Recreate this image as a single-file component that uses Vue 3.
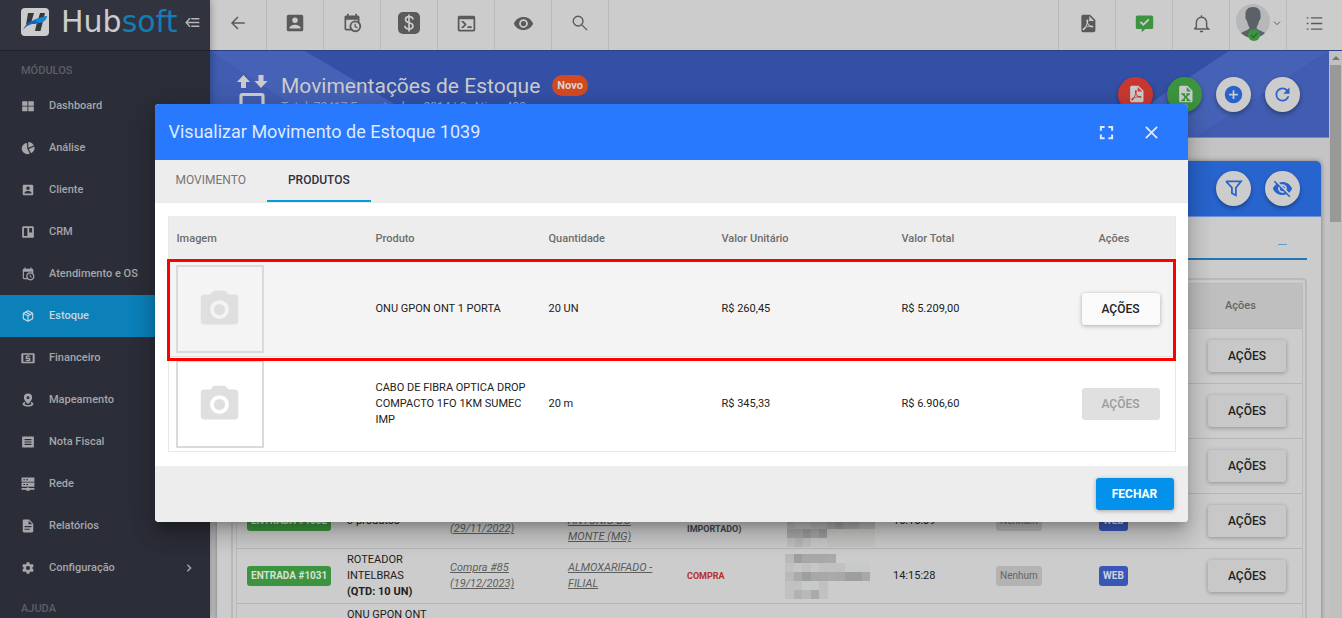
<script setup>
import { h } from 'vue'

const icons = {
  box: 'M6,17C6,15 10,13.9 12,13.9C14,13.9 18,15 18,17V18H6M15,9A3,3 0 0,1 12,12A3,3 0 0,1 9,9A3,3 0 0,1 12,6A3,3 0 0,1 15,9M3,5V19A2,2 0 0,0 5,21H19A2,2 0 0,0 21,19V5A2,2 0 0,0 19,3H5C3.89,3 3,3.9 3,5Z',
  calendar: 'M15,13H16.5V15.82L18.94,17.23L18.19,18.53L15,16.69V13M19,8H5V19H9.67C9.24,18.09 9,17.07 9,16A7,7 0 0,1 16,9C17.07,9 18.09,9.24 19,9.67V8M5,21C3.89,21 3,20.1 3,19V5C3,3.89 3.89,3 5,3H6V1H8V3H16V1H18V3H19A2,2 0 0,1 21,5V11.1C22.24,12.36 23,14.09 23,16A7,7 0 0,1 16,23C14.09,23 12.36,22.24 11.1,21H5M16,11.15A4.85,4.85 0 0,0 11.15,16C11.15,18.68 13.32,20.85 16,20.85A4.85,4.85 0 0,0 20.85,16C20.85,13.32 18.68,11.15 16,11.15Z',
  console: 'M20,19V7H4V19H20M20,3A2,2 0 0,1 22,5V19A2,2 0 0,1 20,21H4A2,2 0 0,1 2,19V5C2,3.89 2.9,3 4,3H20M13,17V15H18V17H13M9.58,13L5.57,9H8.4L11.7,12.3C12.09,12.69 12.09,13.33 11.7,13.72L8.42,17H5.59L9.58,13Z',
  eye: 'M12,9A3,3 0 0,0 9,12A3,3 0 0,0 12,15A3,3 0 0,0 15,12A3,3 0 0,0 12,9M12,17A5,5 0 0,1 7,12A5,5 0 0,1 12,7A5,5 0 0,1 17,12A5,5 0 0,1 12,17M12,4.5C7,4.5 2.73,7.61 1,12C2.73,16.39 7,19.5 12,19.5C17,19.5 21.27,16.39 23,12C21.27,7.61 17,4.5 12,4.5Z',
  eyeOff: 'M11.83,9L15,12.16C15,12.11 15,12.05 15,12A3,3 0 0,0 12,9C11.94,9 11.89,9 11.83,9M7.53,9.8L9.08,11.35C9.03,11.56 9,11.77 9,12A3,3 0 0,0 12,15C12.22,15 12.44,14.97 12.65,14.92L14.2,16.47C13.53,16.8 12.79,17 12,17A5,5 0 0,1 7,12C7,11.21 7.2,10.47 7.53,9.8M2,4.27L4.28,6.55L4.73,7C3.08,8.3 1.78,10 1,12C2.73,16.39 7,19.5 12,19.5C13.55,19.5 15.03,19.2 16.38,18.66L16.81,19.08L19.73,22L21,20.73L3.27,3M12,7A5,5 0 0,1 17,12C17,12.64 16.87,13.26 16.64,13.82L19.57,16.75C21.07,15.5 22.27,13.86 23,12C21.27,7.61 17,4.5 12,4.5C10.6,4.5 9.26,4.75 8,5.2L10.17,7.35C10.74,7.13 11.35,7 12,7Z',
  pdf: 'M14,9H19.5L14,3.5V9M7,2H15L21,8V20A2,2 0 0,1 19,22H7C5.89,22 5,21.1 5,20V4A2,2 0 0,1 7,2M11.93,12.44C12.34,13.34 12.86,14.08 13.46,14.59L13.87,14.91C13,15.07 11.8,15.35 10.53,15.84L10.42,15.88L10.92,14.84C11.37,13.97 11.7,13.18 11.93,12.44M18.41,16.25C18.59,16.07 18.68,15.84 18.69,15.59C18.72,15.39 18.67,15.2 18.57,15.04C18.28,14.57 17.53,14.35 16.29,14.35L15,14.42L14.13,13.84C13.5,13.32 12.93,12.41 12.53,11.28L12.57,11.14C12.9,9.81 13.21,8.2 12.55,7.54C12.39,7.38 12.17,7.3 11.94,7.3H11.7C11.33,7.3 11,7.69 10.91,8.07C10.54,9.4 10.76,10.13 11.13,11.34V11.35C10.88,12.23 10.56,13.25 10.05,14.28L9.09,16.08L8.2,16.57C7,17.32 6.43,18.16 6.32,18.69C6.28,18.88 6.3,19.05 6.37,19.23L6.4,19.28L6.88,19.59L7.32,19.7C8.13,19.7 9.05,18.75 10.29,16.63L10.47,16.56C11.5,16.23 12.78,16 14.5,15.81C15.53,16.32 16.74,16.55 17.5,16.55C17.94,16.55 18.24,16.44 18.41,16.25',
  excel: 'M14,9H19.5L14,3.5V9M7,2H15L21,8V20A2,2 0 0,1 19,22H7C5.89,22 5,21.1 5,20V4A2,2 0 0,1 7,2M7.500,11V12.800H8.800L11.400,15.800L8.800,19H7.500V20.800H12V19H11.400L12.900,17.200L14.400,19H13.800V20.800H18.500V19H17.200L14.400,15.700L17,12.800H18V11H13.600V12.800H14.200L12.900,14.200L11.600,12.800H12V11Z',
  messageCheck: 'M3,2H21A2,2 0 0,1 23,4V17A2,2 0 0,1 21,19H13L8.500,23V19H3A2,2 0 0,1 1,17V4A2,2 0 0,1 3,2M10.500,15L18.200,7.500L16.700,6L10.500,12L7.600,9.200L6.100,10.700Z',
  plusCircle: 'M17,13H13V17H11V13H7V11H11V7H13V11H17M12,2A10,10 0 0,0 2,12A10,10 0 0,0 12,22A10,10 0 0,0 22,12A10,10 0 0,0 12,2Z',
  refresh: 'M17.65,6.35C16.2,4.9 14.21,4 12,4A8,8 0 0,0 4,12A8,8 0 0,0 12,20C15.73,20 18.84,17.45 19.73,14H17.65C16.83,16.33 14.61,18 12,18A6,6 0 0,1 6,12A6,6 0 0,1 12,6C13.66,6 15.14,6.69 16.22,7.78L13,11H20V4L17.65,6.35Z',
  camera: 'M4,4H7L9,2H15L17,4H20A2,2 0 0,1 22,6V18A2,2 0 0,1 20,20H4A2,2 0 0,1 2,18V6A2,2 0 0,1 4,4M12,7A5,5 0 0,0 7,12A5,5 0 0,0 12,17A5,5 0 0,0 17,12A5,5 0 0,0 12,7M12,9A3,3 0 0,1 15,12A3,3 0 0,1 12,15A3,3 0 0,1 9,12A3,3 0 0,1 12,9Z',
  cog: 'M12,15.5A3.5,3.5 0 0,1 8.5,12A3.5,3.5 0 0,1 12,8.5A3.5,3.5 0 0,1 15.5,12A3.5,3.5 0 0,1 12,15.5M19.43,12.97C19.47,12.65 19.5,12.33 19.5,12C19.5,11.67 19.47,11.34 19.43,11L21.54,9.37C21.73,9.22 21.78,8.95 21.66,8.73L19.66,5.27C19.54,5.05 19.27,4.96 19.05,5.05L16.56,6.05C16.04,5.66 15.5,5.32 14.87,5.07L14.5,2.42C14.46,2.18 14.25,2 14,2H10C9.75,2 9.54,2.18 9.5,2.42L9.13,5.07C8.5,5.32 7.96,5.66 7.44,6.05L4.95,5.05C4.73,4.96 4.46,5.05 4.34,5.27L2.34,8.73C2.21,8.95 2.27,9.22 2.46,9.37L4.57,11C4.53,11.34 4.5,11.67 4.5,12C4.5,12.33 4.53,12.65 4.57,12.97L2.46,14.63C2.27,14.78 2.21,15.05 2.34,15.27L4.34,18.73C4.46,18.95 4.73,19.03 4.95,18.95L7.44,17.94C7.96,18.34 8.5,18.68 9.13,18.93L9.5,21.58C9.54,21.82 9.75,22 10,22H14C14.25,22 14.46,21.82 14.5,21.58L14.87,18.93C15.5,18.67 16.04,18.34 16.56,17.94L19.05,18.95C19.27,19.03 19.54,18.95 19.66,18.73L21.66,15.27C21.78,15.05 21.73,14.78 21.54,14.63L19.43,12.97Z',
  package: 'M21,16.5C21,16.88 20.79,17.21 20.47,17.38L12.57,21.82C12.41,21.94 12.21,22 12,22C11.79,22 11.59,21.94 11.43,21.82L3.53,17.38C3.21,17.21 3,16.88 3,16.5V7.5C3,7.12 3.21,6.79 3.53,6.62L11.43,2.18C11.59,2.06 11.79,2 12,2C12.21,2 12.41,2.06 12.57,2.18L20.47,6.62C20.79,6.79 21,7.12 21,7.5V16.5M12,4.15L10.11,5.22L16,8.61L17.96,7.5L12,4.15M6.04,7.5L12,10.85L13.96,9.75L8.08,6.35L6.04,7.5M5,15.91L11,19.29V12.58L5,9.21V15.91M19,15.91V9.21L13,12.58V19.29L19,15.91Z',
  dashboard: 'M2,4H11V11.500H2ZM12.500,4H22V11.500H12.500ZM2,13H11V21H2ZM12.500,13H22V21H12.500Z',
  pie: 'M10.500,3.500V12.500L15,21.500A9.500,9.500 0 1,1 10.500,3.500M12.500,1.500A10.500,10.500 0 0,1 22,7.500L12.500,11.500ZM23,9.500A10.500,10.500 0 0,1 17,20.800L13.500,13.500Z',
  board: 'M4,2H20A2,2 0 0,1 22,4V20A2,2 0 0,1 20,22H4A2,2 0 0,1 2,20V4A2,2 0 0,1 4,2M5,5V19H11V5ZM14,5V13H19V5Z',
  cash: 'M2,4H22A2,2 0 0,1 23.500,6V19A2,2 0 0,1 22,21H2A2,2 0 0,1 .500,19V6A2,2 0 0,1 2,4M4,6.500V18.500H20V6.500ZM8,8H11V7H13V8H16V10H10.500V11.500H16V17H13V18H11V17H8V15H13.500V13.500H8Z',
  marker: 'M12,1A7,7 0 0,1 19,8C19,13 12,19 12,19C12,19 5,13 5,8A7,7 0 0,1 12,1M12,5.500A2.500,2.500 0 1,0 12,10.500A2.500,2.500 0 1,0 12,5.500M6,15L7.500,17C4,19 8,21 12,21C16,21 20,19 16.500,17L18,15C26,20 18,23.500 12,23.500C6,23.500 -2,20 6,15',
  receipt: 'M2,2L4,3L6,2L8,3L10,2L12,3L14,2L16,3L18,2L20,3L22,2V22L20,21L18,22L16,21L14,22L12,21L10,22L8,21L6,22L4,21L2,22ZM6,7V9H18V7ZM6,11V13H18V11ZM6,15V17H18V15Z',
  server: 'M1,1H23V8H1ZM1,9.500H23V16.500H1ZM11,16H13V19H23V22H15V23.500H9V22H1V19H11ZM4,4V5.500H7V4ZM9,4V5.500H12V4ZM4,12V13.500H7V12ZM9,12V13.500H12V12Z',
  file: 'M5,1H14L21,8V21A2,2 0 0,1 19,23H5A2,2 0 0,1 3,21V3A2,2 0 0,1 5,1M13,3V9H19.500ZM6,12V14H18V12ZM6,16.500V18.500H15V16.500Z'
}

const strokes = {
  back: { d: 'M21 12H4M12 4L4 12L12 20', w: 2 },
  search: { d: 'M9.500 3A6.500 6.500 0 1 0 9.500 16A6.500 6.500 0 1 0 9.500 3M14.500 14.500L21.500 21.500', w: 1.8 },
  bell: { d: 'M3 19H21L18.500 16.500V10.500A6.500 6.500 0 0 0 5.500 10.500V16.500L3 19M12 4V1.500M10 22H14', w: 1.8 },
  chevronDown: { d: 'M3 8L12 17L21 8', w: 3 },
  chevronRight: { d: 'M8 4L16 12L8 20', w: 3.500 },
  list: { d: 'M7 4H23M7 12H23M7 20H23M1 4H3.500M1 12H3.500M1 20H3.500', w: 1.800 },
  fold: { d: 'M8 12H23M10 6H23M10 18H23M8 5L2 12L8 19M2 12H10', w: 2.400 },
  fullscreen: { d: 'M3 9V3H9M15 3H21V9M21 15V21H15M9 21H3V15', w: 3.200 },
  close: { d: 'M3 3L21 21M21 3L3 21', w: 2.800 },
  filter: { d: 'M2.500 3H21.500L15 11V20.500L10 18V11L2.500 3', w: 2.200 }
}

const Icon = ({ name, size }) => {
  const s = strokes[name]
  return h('svg', { viewBox: '0 0 24 24', width: size, height: size, 'aria-hidden': 'true' }, [
    s
      ? h('path', { d: s.d, fill: 'none', stroke: 'currentColor', 'stroke-width': s.w })
      : h('path', { d: icons[name], fill: 'currentColor', 'fill-rule': 'evenodd' })
  ])
}
Icon.props = ['name', 'size']

const menu = [
  ['Dashboard', 'dashboard'],
  ['Análise', 'pie'],
  ['Cliente', 'box'],
  ['CRM', 'board'],
  ['Atendimento e OS', 'calendar'],
  ['Estoque', 'package'],
  ['Financeiro', 'cash'],
  ['Mapeamento', 'marker'],
  ['Nota Fiscal', 'receipt'],
  ['Rede', 'server'],
  ['Relatórios', 'file'],
  ['Configuração', 'cog']
]

const products = [
  { name: 'ONU GPON ONT 1 PORTA', qty: '20 UN', unit: 'R$ 260,45', total: 'R$ 5.209,00', off: false },
  { name: 'CABO DE FIBRA OPTICA DROP COMPACTO 1FO 1KM SUMEC IMP', qty: '20 m', unit: 'R$ 345,33', total: 'R$ 6.906,60', off: true }
]

const widths = [100, 103, 118, 119, 99, 107, 103, 103, 109, 104]
const movements = [
  {}, {}, {},
  {
    id: 'ENTRADA #1032', items: ['3 produtos'], link: ['Compra', '(29/11/2022)'],
    place: ['SANTO', 'ANTONIO DO', 'MONTE (MG)'], kind: ['ENTRADA (XML', 'IMPORTADO)'], tone: 'slate', time: '16:15:09',
    pixels: [
      'aaaaaaaaaaa', 'bbbbbbbbbbb', 'dccddfgffdd', 'ffgfghhhhhh', 'bcbaahhhhhh'
    ]
  },
  {
    id: 'ENTRADA #1031', items: ['ROTEADOR', 'INTELBRAS'], extra: '(QTD: 10 UN)', link: ['Compra #85', '(19/12/2023)'],
    place: ['ALMOXARIFADO -', 'FILIAL'], kind: ['COMPRA'], tone: 'red', time: '14:15:28',
    pixels: ['cgfffe----', 'bhbhbbbaaa', 'cegffefggf', 'bbaab-----', 'bdceb-----']
  },
  { items: ['ONU GPON ONT', '1 PORTA'], extra: '(QTD: 5 UN)', last: true }
]
</script>

<template>
  <div class="app">
    <aside class="sidebar">
      <div class="brand">
        <svg class="mark" viewBox="0 0 28 28" width="28" height="28" aria-hidden="true">
          <rect width="28" height="28" rx="4" fill="#ccc" />
          <path d="M7 5H13L10.500 13.500L5 17ZM19 5H24L19.500 23H14L15.500 16L19 12H17Z" fill="#34373d" />
          <path d="M2 22C5 14 13 11 26 8C25 14 18 16 11 16C7 17 4 19 2 22Z" fill="#1262c4" />
          <path d="M13 12C17 10 21 9 26 8C25 13 22 14 18 15Z" fill="#1387cf" />
        </svg>
        <span class="wordmark">Hub<span>soft</span></span>
        <button class="fold" aria-label="Recolher menu"><Icon name="fold" size="15" /></button>
      </div>
      <h2 class="section">MÓDULOS</h2>
      <nav>
        <a v-for="([label, icon], i) in menu" :key="label" href="#" class="nav-item" :class="{ active: i === 5 }">
          <Icon :name="icon" size="14" />
          <span>{{ label }}</span>
          <Icon v-if="i === 11" class="more" name="chevronRight" size="10" />
        </a>
      </nav>
      <h2 class="section">AJUDA</h2>
    </aside>

    <div class="main">
      <header class="topbar">
        <button aria-label="Voltar"><Icon name="back" size="18" /></button>
        <button aria-label="Clientes"><Icon name="box" size="22" /></button>
        <button aria-label="Agenda"><Icon name="calendar" size="20" /></button>
        <button aria-label="Financeiro">
          <svg viewBox="0 0 22 22" width="22" height="22" aria-hidden="true">
            <rect width="22" height="22" rx="5" fill="#5a5a5a" />
            <path d="M15 7.500C14.500 3.500 7.500 4 7.500 7.500C7.500 12 15 9.500 15 14C15 18 7 18 7 13.800M11 2.500V19.500" fill="none" stroke="#ccc" stroke-width="1.700" />
          </svg>
        </button>
        <button aria-label="Console"><Icon name="console" size="21" /></button>
        <button aria-label="Visualizar"><Icon name="eye" size="21" /></button>
        <button aria-label="Buscar"><Icon name="search" size="18" /></button>
        <span class="spacer"></span>
        <button aria-label="Relatórios PDF"><Icon name="pdf" size="21" /></button>
        <button aria-label="Mensagens" class="ok"><Icon name="messageCheck" size="19" /></button>
        <button aria-label="Notificações"><Icon name="bell" size="19" /></button>
        <button aria-label="Usuário" class="user">
          <svg viewBox="0 0 36 40" width="36" height="40" aria-hidden="true">
            <circle cx="18" cy="18" r="17" fill="#b7b8ba" />
            <path d="M18 4C12 4 10 8 10.500 13C10 15 11 17 12 18C12.500 21 14 23 14.500 25C14 27 9 28 6 30A17 17 0 0 0 30 30C27 28 22 27 21.500 25C22 23 23.500 21 24 18C25 17 26 15 25.500 13C26 8 24 4 18 4Z" fill="#5b6168" />
            <circle cx="19" cy="32" r="6" fill="#3d9440" />
            <path d="M16 32L18.500 34.500L22.500 30" fill="none" stroke="#2c6e30" stroke-width="1.500" />
          </svg>
          <Icon name="chevronDown" size="8" />
        </button>
        <button aria-label="Menu rápido"><Icon name="list" size="17" /></button>
      </header>

      <div class="scroll">
        <div class="page">
          <section class="banner">
            <svg class="rays left" viewBox="0 0 240 86" width="240" height="86" aria-hidden="true">
              <path d="M0 0L130 86H0Z" fill="#415cb0" />
              <path d="M0 0H95L240 86H130Z" fill="#4662b6" />
            </svg>
            <svg class="rays right" viewBox="0 0 260 86" width="260" height="86" aria-hidden="true">
              <path d="M160 0H260L128 86H30Z" fill="#4662b6" />
              <path d="M260 0V86H128Z" fill="#415cb0" />
            </svg>
            <svg class="stock" viewBox="0 0 32 38" width="32" height="38" aria-hidden="true">
              <path d="M7.500 0L14 7H10V13H5V7H1ZM22.500 0H27.500V6H31.500L25 13L18.500 6H22.500Z" fill="#ccc" />
              <path d="M5 36V21Q5 19.500 6.500 19.500H25.500Q27 19.500 27 21V36Z" fill="none" stroke="#ccc" stroke-width="3.200" />
            </svg>
            <div class="heading">
              <h1>Movimentações de Estoque</h1>
              <p>Total: 72417 Encontrados: 2014 | S. Ativo: 400</p>
            </div>
            <span class="new">Novo</span>
            <div class="actions">
              <button class="round red" aria-label="Exportar PDF"><Icon name="pdf" size="20" /></button>
              <button class="round green" aria-label="Exportar Excel"><Icon name="excel" size="20" /></button>
              <button class="round" aria-label="Adicionar"><Icon name="plusCircle" size="21" /></button>
              <button class="round" aria-label="Atualizar"><Icon name="refresh" size="21" /></button>
            </div>
          </section>

          <section class="card">
            <div class="card-head">
              <button class="round" aria-label="Filtrar"><Icon name="filter" size="19" /></button>
              <button class="round" aria-label="Ocultar"><Icon name="eyeOff" size="21" /></button>
            </div>
            <div class="card-body">
              <div class="filters"><i></i></div>
              <div class="frame">
                <table class="moves">
                  <colgroup><col v-for="(w, i) in widths" :key="i" :style="{ width: w + 'px' }" /></colgroup>
                  <thead>
                    <tr><th v-for="n in 9" :key="n"></th><th class="act">Ações</th></tr>
                  </thead>
                  <tbody>
                    <tr v-for="(m, i) in movements" :key="i">
                      <td><span v-if="m.id" class="tag green">{{ m.id }}</span></td>
                      <td><div v-for="t in m.items" :key="t">{{ t }}</div><b v-if="m.extra">{{ m.extra }}</b></td>
                      <td><a v-if="m.link" href="#"><span v-for="t in m.link" :key="t">{{ t }}</span></a></td>
                      <td><a v-if="m.place" href="#"><span v-for="t in m.place" :key="t">{{ t }}</span></a></td>
                      <td class="kind" :class="m.tone"><div v-for="t in m.kind" :key="t">{{ t }}</div></td>
                      <td>
                        <div v-if="m.pixels" class="mosaic" :class="{ wide: m.pixels[0].length === 11 }">
                          <template v-for="(line, r) in m.pixels" :key="r">
                            <i v-for="(c, k) in line" :key="k" :class="'p' + c"></i>
                          </template>
                        </div>
                      </td>
                      <td>{{ m.time }}</td>
                      <td><span v-if="m.id" class="tag none">Nenhum</span></td>
                      <td><span v-if="m.id" class="tag web">WEB</span></td>
                      <td><button v-if="!m.last" class="btn dim">AÇÕES</button></td>
                    </tr>
                  </tbody>
                </table>
              </div>
            </div>
          </section>
        </div>
        <div class="track"><i class="up"></i><i class="thumb"></i></div>
      </div>
    </div>

    <div class="overlay">
      <section class="modal" role="dialog" aria-labelledby="modal-title">
        <header class="modal-head">
          <h2 id="modal-title">Visualizar Movimento de Estoque 1039</h2>
          <button aria-label="Tela cheia"><Icon name="fullscreen" size="15" /></button>
          <button aria-label="Fechar janela"><Icon name="close" size="15" /></button>
        </header>
        <div class="tabs" role="tablist">
          <button role="tab">MOVIMENTO</button>
          <button role="tab" class="on" aria-selected="true">PRODUTOS</button>
        </div>
        <div class="modal-body">
          <div class="products-wrap">
            <table class="products">
              <colgroup><col class="c1" /><col class="c2" /><col class="c2" /><col class="c3" /><col class="c3" /><col class="c4" /></colgroup>
              <thead>
                <tr>
                  <th>Imagem</th><th>Produto</th><th>Quantidade</th><th>Valor Unitário</th><th>Valor Total</th><th class="act">Ações</th>
                </tr>
              </thead>
              <tbody>
                <tr v-for="p in products" :key="p.name">
                  <td><div class="photo"><Icon name="camera" size="45" /></div></td>
                  <td>{{ p.name }}</td>
                  <td>{{ p.qty }}</td>
                  <td>{{ p.unit }}</td>
                  <td>{{ p.total }}</td>
                  <td><button class="btn" :disabled="p.off">AÇÕES</button></td>
                </tr>
              </tbody>
            </table>
            <div class="highlight"></div>
          </div>
        </div>
        <footer class="modal-foot"><button class="btn primary">FECHAR</button></footer>
      </section>
    </div>
  </div>
</template>

<style>
body { margin: 0; overflow: hidden; }
</style>

<style scoped>
.app { display: flex; height: 100vh; overflow: hidden; position: relative; font: 11px/16px Roboto, "Liberation Sans", sans-serif; color: #212121; }
.app * { box-sizing: border-box; }
button { font: inherit; border: 0; padding: 0; margin: 0; background: none; color: inherit; display: flex; align-items: center; justify-content: center; }
svg { display: block; flex: none; }
h1, h2, p { margin: 0; font-weight: 400; }

.sidebar { width: 210px; flex: none; background: #2b2d38; color: #a5a6aa; position: relative; z-index: 1; box-shadow: 0 0 8px rgba(0, 0, 0, .35); }
.brand { height: 51px; display: flex; align-items: center; padding: 0 10px 6px 21px; background: #31343f; border-bottom: 1px solid #20222a; }
.wordmark { font: 30px/32px "DejaVu Sans", sans-serif; color: #ccc; margin-left: 12px; flex: 1; }
.wordmark span { color: #147db4; }
.fold { color: #b5b6ba; }
.section { height: 34px; padding: 8px 21px 0; font-size: 11px; line-height: 24px; font-weight: 500; color: #5d5f68; }
.nav-item { height: 42px; display: flex; align-items: center; gap: 14px; padding: 0 16px 0 21px; color: inherit; text-decoration: none; font-weight: 500; }
.nav-item span { flex: 1; }
.nav-item.active { background: #0b80b9; color: #c3d7e2; }

.main { flex: 1; min-width: 0; display: flex; flex-direction: column; }
.topbar { height: 51px; flex: none; display: flex; background: #ccc; color: #5a5a5a; border-bottom: 1px solid #2b4182; }
.topbar button { width: 57px; padding-bottom: 4px; border-right: 1px solid #bababa; }
.topbar .spacer { flex: 1; border-right: 1px solid #bababa; }
.topbar button:last-child { width: 55px; border: 0; }
.topbar .ok { color: #3d9440; }
.topbar .user { gap: 2px; }
.scroll { flex: 1; min-height: 0; display: flex; }
.page { flex: 1; min-width: 0; background: #c4c4c4; overflow: hidden; }
.banner { height: 87px; position: relative; display: flex; align-items: center; padding: 0 29px 0 26px; background: #3350a6; color: #ccc; border-bottom: 1px solid #7187cb; }
.banner > * { position: relative; }
.banner > .rays { position: absolute; top: 0; }
.rays.left { left: 0; }
.rays.right { right: 0; }
.heading { margin-left: 13px; }
.heading h1 { font-size: 21px; line-height: 26px; }
.heading p { font-size: 12px; color: #93a1cf; }
.new { align-self: flex-start; margin: 24px 0 0 12px; background: #d44a20; color: #dcd5d0; border-radius: 11px; padding: 0 5px; font-size: 11px; line-height: 21px; font-weight: 700; }
.actions { margin-left: auto; display: flex; gap: 14px; }
.round { width: 35px; height: 35px; border-radius: 50%; background: #ccc; color: #2962ca; box-shadow: 0 2px 4px rgba(0, 0, 0, .35); }
.round.red { background: #c93830; color: #ccc; }
.round.green { background: #3d9440; color: #ccc; }

.card { margin: 23px 8px 0 7px; background: #ccc; border-radius: 5px; box-shadow: 0 0 5px rgba(0, 0, 0, .4); height: 600px; }
.card-head { height: 56px; border-radius: 5px 5px 0 0; background: #2864ce; display: flex; align-items: center; justify-content: flex-end; gap: 14px; padding: 0 21px; border-bottom: 1px solid #6d92d6; }
.card-body { padding: 0 14px; }
.filters { height: 43px; border-bottom: 2px solid #2078b6; display: flex; align-items: center; justify-content: flex-end; padding: 13px 20px 0; }
.filters i { width: 9px; height: 1px; background: #5f9cc8; }
.frame { margin-top: 18px; border: 2px solid #b9b9b9; border-radius: 4px; padding: 3px; }
.moves { width: 100%; table-layout: fixed; border-collapse: separate; border-spacing: 0; border: 1px solid #bbb; }
.moves th { height: 45px; background: #bfbfbf; border-bottom: 1px solid #b8b8b8; color: #656565; font-weight: 500; text-align: left; }
.moves .act { padding: 0 0 0 27px; }
.moves td { height: 55px; padding: 0 0 0 10px; border-bottom: 1px solid #b6b6b6; vertical-align: middle; white-space: nowrap; }
.moves td a { color: #5d5d5d; font-style: italic; text-decoration: none; }
.moves td a span { display: block; width: fit-content; text-decoration: underline; }
.moves td b { font-weight: 700; }
.moves .kind { font-size: 9px; font-weight: 700; }
.slate { color: #3c4a50; }
.moves .red { color: #b92c2c; }
.tag { display: inline-block; border-radius: 3px; padding: 0 4px; line-height: 20px; font-size: 10px; font-weight: 700; color: #d5e0d5; }
.tag.green { background: #3d9440; }
.tag.none { background: #b3b3b3; color: #666; font-weight: 400; }
.tag.web { background: #3a57b8; color: #d0d4e2; }
.mosaic { display: grid; grid-template-columns: repeat(10, 1fr); grid-auto-rows: 9px; width: 85px; margin-left: -1px; }
.mosaic.wide { grid-template-columns: repeat(11, 1fr); width: 88px; margin-left: 1px; margin-bottom: -6px; }
.pa { background: #c8c9c9; }
.pb { background: #c1c1c2; }
.pc { background: #bab8b8; }
.pd { background: #b4b2b0; }
.pe { background: #a9aaad; }
.pf { background: #a8a8a7; }
.pg { background: #9d9ea0; }
.ph { background: #c6c6c4; }

.track { width: 13px; flex: none; background: #c0c0c0; padding: 5px 1px; display: flex; flex-direction: column; align-items: center; gap: 5px; }
.up { border: 4px solid transparent; border-top: 0; border-bottom-color: #777; }
.thumb { width: 100%; height: 157px; background: #999; }

.overlay { position: absolute; inset: 0; z-index: 2; padding-top: 8px; display: flex; align-items: center; justify-content: center; }
.modal { width: calc(100% - 309px); background: #fff; border-radius: 4px; overflow: hidden; box-shadow: 0 7px 9px -4px rgba(0, 0, 0, .2), 0 14px 21px 2px rgba(0, 0, 0, .14), 0 5px 26px 4px rgba(0, 0, 0, .12); }
.modal-head { height: 56px; display: flex; align-items: center; gap: 30px; padding: 0 29px 0 14px; background: #2979ff; color: #dfeaff; }
.modal-head h2 { flex: 1; font-size: 18px; line-height: 24px; }
.tabs { height: 43px; display: flex; background: #ededed; color: #757575; border-bottom: 1px solid #eaeaea; font-size: 12px; }
.tabs button { padding: 0 21px; border-bottom: 2px solid transparent; }
.tabs .on { color: #2d323e; border-color: #039be5; font-weight: 500; }
.modal-body { padding: 13px 14px 14px 13px; }
.products-wrap { position: relative; }
.products { width: 100%; table-layout: fixed; border-collapse: separate; border-spacing: 0; border: 1px solid #e8e8e8; border-top: 0; }
.c1 { width: 199px; }
.c2 { width: 173px; }
.c3 { width: 180px; }
.c4 { width: 101px; }
.products th { height: 46px; padding: 0 8px; background: #ededed; text-align: left; font-weight: 500; color: #6d6d6d; border-bottom: 1px solid #e4e4e4; }
.products .act { padding-left: 25px; }
.products td { height: 94px; padding: 3px 8px; vertical-align: middle; }
.products tbody tr:first-child td { background: #f4f4f4; border-bottom: 1px solid #e2e2e2; }
.photo { width: 88px; height: 88px; margin-left: -1px; border: 2px solid #dadada; display: flex; align-items: center; justify-content: center; color: #dfdfdf; }
.highlight { position: absolute; top: 43px; left: -1px; right: -2px; height: 102px; border: 3px solid #f00; pointer-events: none; }
.btn { width: 78px; height: 32px; border-radius: 3px; background: #fafafa; font-size: 12px; font-weight: 500; box-shadow: 0 1px 4px rgba(0, 0, 0, .3); }
.btn:disabled { background: #e0e0e0; color: #9b9b9b; box-shadow: none; }
.btn.dim { background: #c8c8c8; }
.btn.primary { background: #0391ec; color: #fff; font-weight: 700; }
.modal-foot { height: 56px; background: #ededed; display: flex; align-items: center; justify-content: flex-end; padding: 0 14px; }
</style>
